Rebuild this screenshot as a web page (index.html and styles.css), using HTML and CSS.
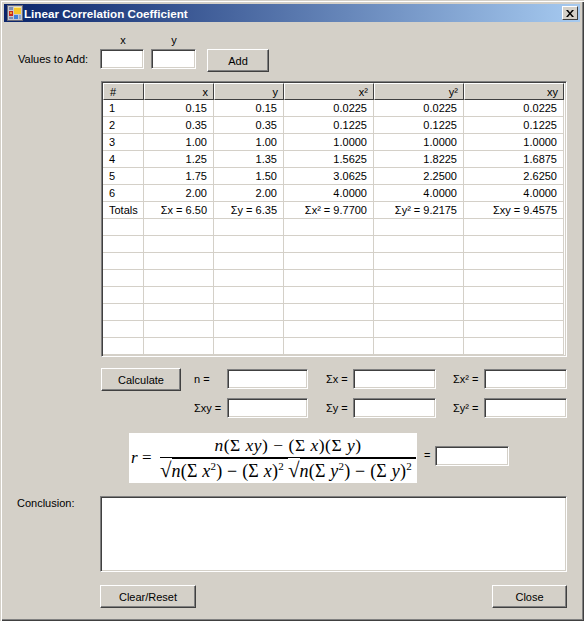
FILE: index.html
```html
<!DOCTYPE html>
<html>
<head>
    <title>Linear Correlation Coefficient</title>
    <meta charset="UTF-8">
    <link rel="stylesheet" href="styles.css">
</head>
<body>
    <div class="window">
        <div class="titlebar">
            <svg class="app-icon" width="16" height="16" viewBox="0 0 16 16">
                <rect x="0.5" y="0.5" width="15" height="15" fill="#c8c8d0" stroke="#6b6b78"/>
                <rect x="2" y="2" width="4" height="3" fill="#7d8db0"/>
                <rect x="2" y="6" width="4" height="5" fill="#c8281e"/>
                <rect x="3" y="7" width="2" height="2" fill="#f0a030"/>
                <rect x="7" y="2" width="7" height="7" fill="#f6c62a"/>
                <rect x="7" y="2" width="7" height="1" fill="#fdeb8c"/>
                <rect x="2" y="12" width="4" height="2" fill="#7d8db0"/>
                <rect x="7" y="10" width="4" height="4" fill="#3f7fd8"/>
                <rect x="12" y="10" width="2" height="4" fill="#8fa6c8"/>
            </svg>
            <span class="title">Linear Correlation Coefficient</span>
            <button class="close-btn">
                <svg width="8" height="7" viewBox="0 0 8 7">
                    <path d="M0 0h2l2 2.500 2-2.500h2l-3 3.500 3 3.500h-2l-2-2.500-2 2.500h-2l3-3.500z" fill="#000"/>
                </svg>
            </button>
        </div>

        <div class="add-labels">
            <span class="axis-label axis-x">x</span>
            <span class="axis-label axis-y">y</span>
        </div>
        <div class="add-row">
            <span class="label values-label">Values to Add:</span>
            <div class="field field-x"></div>
            <div class="field field-y"></div>
            <button class="btn btn-add">Add</button>
        </div>

        <div class="grid-frame">
            <table class="data-grid">
                <colgroup>
                    <col class="col-num"><col class="col-val"><col class="col-val"><col class="col-sq"><col class="col-sq"><col class="col-xy">
                </colgroup>
                <thead>
                    <tr><th class="left">#</th><th>x</th><th>y</th><th>x²</th><th>y²</th><th>xy</th></tr>
                </thead>
                <tbody>
                    <tr><td class="left">1</td><td>0.15</td><td>0.15</td><td>0.0225</td><td>0.0225</td><td>0.0225</td></tr>
                    <tr><td class="left">2</td><td>0.35</td><td>0.35</td><td>0.1225</td><td>0.1225</td><td>0.1225</td></tr>
                    <tr><td class="left">3</td><td>1.00</td><td>1.00</td><td>1.0000</td><td>1.0000</td><td>1.0000</td></tr>
                    <tr><td class="left">4</td><td>1.25</td><td>1.35</td><td>1.5625</td><td>1.8225</td><td>1.6875</td></tr>
                    <tr><td class="left">5</td><td>1.75</td><td>1.50</td><td>3.0625</td><td>2.2500</td><td>2.6250</td></tr>
                    <tr><td class="left">6</td><td>2.00</td><td>2.00</td><td>4.0000</td><td>4.0000</td><td>4.0000</td></tr>
                    <tr><td class="left">Totals</td><td>Σx = 6.50</td><td>Σy = 6.35</td><td>Σx² = 9.7700</td><td>Σy² = 9.2175</td><td>Σxy = 9.4575</td></tr>
                    <tr><td></td><td></td><td></td><td></td><td></td><td></td></tr>
                    <tr><td></td><td></td><td></td><td></td><td></td><td></td></tr>
                    <tr><td></td><td></td><td></td><td></td><td></td><td></td></tr>
                    <tr><td></td><td></td><td></td><td></td><td></td><td></td></tr>
                    <tr><td></td><td></td><td></td><td></td><td></td><td></td></tr>
                    <tr><td></td><td></td><td></td><td></td><td></td><td></td></tr>
                    <tr><td></td><td></td><td></td><td></td><td></td><td></td></tr>
                    <tr><td></td><td></td><td></td><td></td><td></td><td></td></tr>
                </tbody>
            </table>
        </div>

        <div class="calc-area">
            <button class="btn btn-calc">Calculate</button>
            <div class="calc-fields">
                <div class="calc-row">
                    <span class="label sum-a">n =</span>
                    <div class="field field-a"></div>
                    <span class="label sum-b">Σx =</span>
                    <div class="field field-b"></div>
                    <span class="label sum-c">Σx² =</span>
                    <div class="field field-c"></div>
                </div>
                <div class="calc-row">
                    <span class="label sum-a">Σxy =</span>
                    <div class="field field-a"></div>
                    <span class="label sum-b">Σy =</span>
                    <div class="field field-b"></div>
                    <span class="label sum-c">Σy² =</span>
                    <div class="field field-c"></div>
                </div>
            </div>
        </div>

        <div class="formula-row">
            <div class="formula">
                <span class="formula-r"><i>r</i> =</span>
                <div class="fraction">
                    <div class="numerator"><i>n</i>(Σ <i>xy</i>) − (Σ <i>x</i>)(Σ <i>y</i>)</div>
                    <div class="denominator">
                        <span class="root">√</span><span class="radicand"><i>n</i>(Σ <i>x</i><sup>2</sup>) − (Σ <i>x</i>)<sup>2</sup></span><span class="root">√</span><span class="radicand"><i>n</i>(Σ <i>y</i><sup>2</sup>) − (Σ <i>y</i>)<sup>2</sup></span>
                    </div>
                </div>
            </div>
            <span class="label formula-eq">=</span>
            <div class="field field-r"></div>
        </div>

        <div class="conclusion-row">
            <span class="label conclusion-label">Conclusion:</span>
            <div class="field field-conclusion"></div>
        </div>

        <div class="bottom-row">
            <button class="btn btn-clear">Clear/Reset</button>
            <button class="btn btn-close">Close</button>
        </div>
    </div>
</body>
</html>
```

FILE: styles.css
```css
html, body {
    margin: 0;
    padding: 0;
}

body {
    width: 584px;
    height: 621px;
    overflow: hidden;
    font-family: "Liberation Sans", Arial, sans-serif;
    font-size: 11px;
    color: #000000;
    background: #d4d0c8;
}

.window {
    box-sizing: border-box;
    width: 584px;
    height: 621px;
    padding: 4px 4px 0 4px;
    background: #d4d0c8;
    box-shadow: inset 1px 1px 0 #d4d0c8, inset 2px 2px 0 #ffffff, inset -1px -1px 0 #404040, inset -2px -2px 0 #808080;
}

.titlebar {
    display: flex;
    align-items: center;
    height: 18px;
    padding: 0 2px 0 3px;
    background: linear-gradient(to right, #0a246a, #a6caf0);
}

.app-icon {
    flex: none;
}

.title {
    flex: 1;
    margin-left: 1px;
    font-size: 11.65px;
    font-weight: bold;
    color: #ffffff;
}

.close-btn {
    display: flex;
    align-items: center;
    justify-content: center;
    box-sizing: border-box;
    width: 16px;
    height: 14px;
    padding: 0;
    border: 1px solid;
    border-color: #ffffff #404040 #404040 #ffffff;
    background: #d4d0c8;
}

.label {
    white-space: nowrap;
}

.field {
    box-sizing: border-box;
    flex: none;
    height: 20px;
    background: #ffffff;
    border: 1px solid;
    border-color: #808080 #ffffff #ffffff #808080;
    box-shadow: inset 1px 1px 0 #404040, inset -1px -1px 0 #d4d0c8;
}

.btn {
    box-sizing: border-box;
    flex: none;
    height: 23px;
    padding: 0;
    font-family: inherit;
    font-size: 11px;
    color: #000000;
    background: #d4d0c8;
    border: 1px solid;
    border-color: #ffffff #404040 #404040 #ffffff;
    box-shadow: inset -1px -1px 0 #808080;
}

/* values to add */
.add-labels {
    display: flex;
    height: 13px;
    margin-top: 12px;
}

.axis-label {
    width: 10px;
    text-align: center;
}

.axis-x {
    margin-left: 114px;
}

.axis-y {
    margin-left: 41px;
}

.add-row {
    display: flex;
    align-items: flex-start;
    margin-top: 2px;
    padding-left: 14px;
}

.values-label {
    width: 82px;
    margin-top: 4px;
}

.field-x {
    width: 44px;
}

.field-y {
    width: 45px;
    margin-left: 7px;
}

.btn-add {
    width: 62px;
    margin-left: 11px;
}

/* data grid */
.grid-frame {
    box-sizing: border-box;
    width: 466px;
    height: 276px;
    margin: 9px 0 0 97px;
    padding: 1px 1px 0 1px;
    background: #ffffff;
    border: 1px solid;
    border-color: #808080 #ffffff #ffffff #808080;
    box-shadow: inset 1px 1px 0 #404040, inset -1px -1px 0 #d4d0c8;
    overflow: hidden;
}

.data-grid {
    table-layout: fixed;
    width: 461px;
    border-collapse: separate;
    border-spacing: 0;
    font-size: 11px;
}

.col-num {
    width: 41px;
}

.col-val {
    width: 70px;
}

.col-sq {
    width: 90px;
}

.col-xy {
    width: 100px;
}

.data-grid th,
.data-grid td {
    box-sizing: border-box;
    height: 17px;
    padding: 0 6px 0 0;
    text-align: right;
    font-weight: normal;
    white-space: nowrap;
    overflow: hidden;
}

.data-grid th {
    background: #d4d0c8;
    border: 1px solid;
    border-color: #ffffff #404040 #404040 #ffffff;
    padding-right: 5px;
}

.data-grid td {
    border-right: 1px solid #d4d0c8;
    border-bottom: 1px solid #d4d0c8;
}

.data-grid .left {
    padding-left: 6px;
    text-align: left;
}

/* calculate */
.calc-area {
    display: flex;
    align-items: flex-start;
    margin-top: 11px;
    padding-left: 97px;
}

.btn-calc {
    width: 80px;
}

.calc-row {
    display: flex;
    align-items: center;
    height: 20px;
    margin: 1px 0 9px 0;
}

.sum-a {
    width: 33px;
    margin-left: 13px;
}

.field-a {
    width: 81px;
}

.sum-b {
    width: 27px;
    margin-left: 18px;
}

.field-b {
    width: 83px;
}

.sum-c {
    width: 31px;
    margin-left: 17px;
}

.field-c {
    width: 83px;
}

/* formula */
.formula-row {
    display: flex;
    align-items: flex-start;
    height: 50px;
    margin-top: 6px;
    padding-left: 125px;
}

.formula {
    display: flex;
    align-items: center;
    box-sizing: border-box;
    width: 288px;
    height: 50px;
    padding: 0 1px 0 2px;
    background: #ffffff;
    font-family: "Liberation Serif", "Times New Roman", serif;
    font-size: 17px;
}

.formula-r {
    flex: none;
    width: 29px;
    white-space: nowrap;
}

.fraction {
    flex: 1;
    text-align: center;
    white-space: nowrap;
}

.numerator {
    height: 23px;
    line-height: 22px;
    font-size: 17.5px;
    letter-spacing: 0.5px;
    border-bottom: 1px solid #000000;
}

.denominator {
    display: flex;
    height: 24px;
    font-size: 18px;
}

.root {
    flex: none;
    font-size: 21px;
    line-height: 24px;
}

.radicand {
    flex: 1;
    height: 23px;
    border-top: 1px solid #000000;
    line-height: 25px;
    letter-spacing: 0.2px;
    text-align: left;
}

.radicand sup {
    font-size: 11px;
    line-height: 0;
}

.formula-eq {
    margin: 16px 0 0 7px;
}

.field-r {
    width: 74px;
    margin: 13px 0 0 5px;
}

/* conclusion */
.conclusion-row {
    display: flex;
    align-items: flex-start;
    margin-top: 13px;
    padding-left: 13px;
}

.conclusion-label {
    width: 83px;
    margin-top: 1px;
}

.field-conclusion {
    width: 467px;
    height: 76px;
}

.bottom-row {
    display: flex;
    justify-content: space-between;
    width: 467px;
    margin: 13px 0 0 96px;
}

.btn-clear {
    width: 96px;
}

.btn-close {
    width: 75px;
}
```
